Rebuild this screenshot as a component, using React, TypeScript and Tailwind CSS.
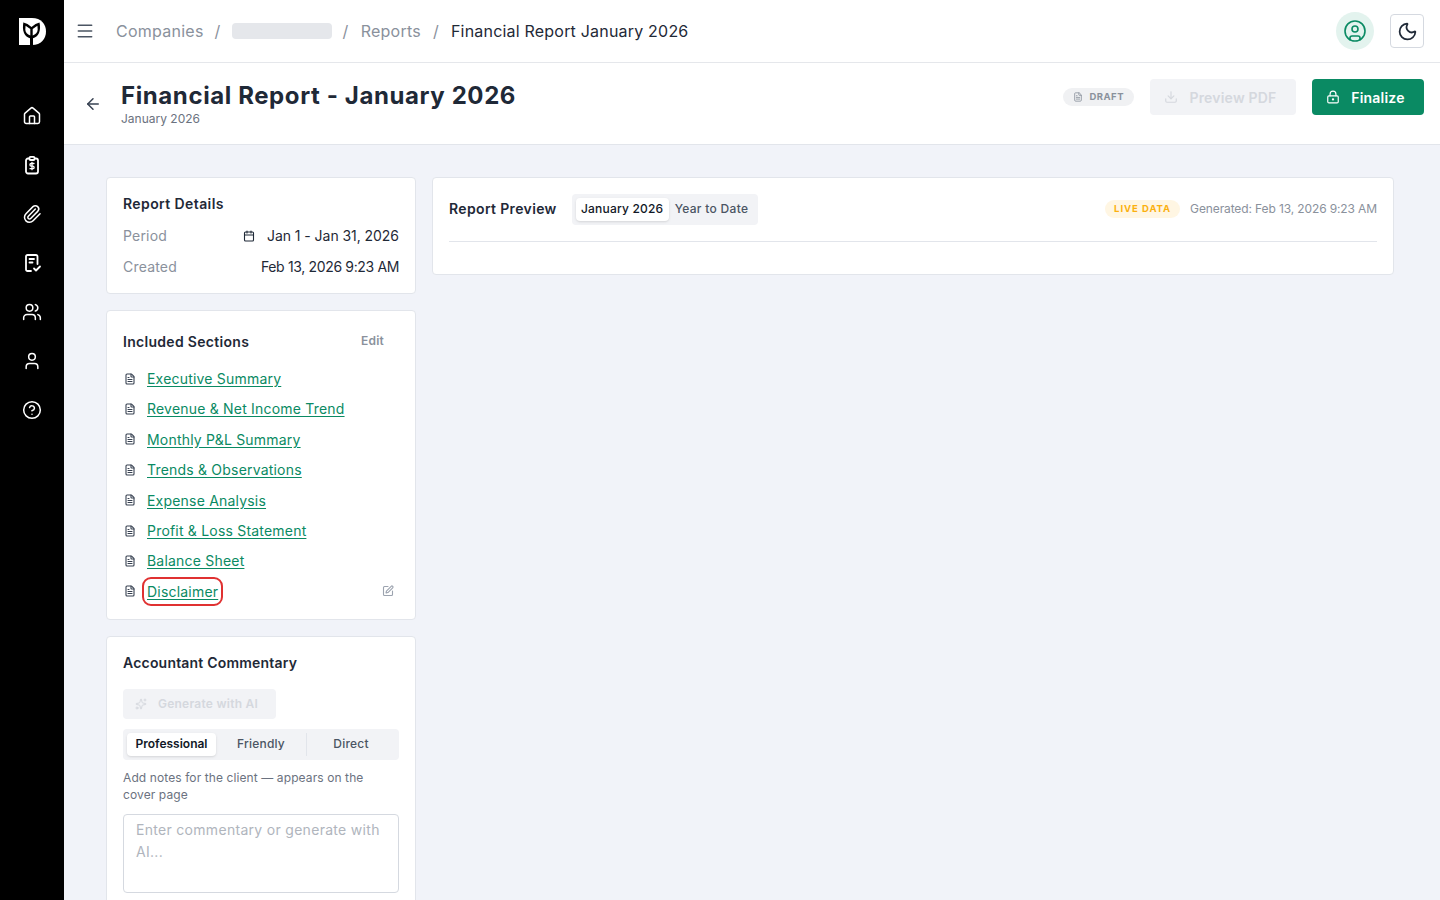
import React from 'react';
import { ArrowLeft, CircleHelp, CircleUser, Download, FileText, House, LockKeyhole, Menu, Moon, Paperclip, SquarePen, User, Users, Sparkles, Calendar } from 'lucide-react';

const sections = [
    'Executive Summary',
    'Revenue & Net Income Trend',
    'Monthly P&L Summary',
    'Trends & Observations',
    'Expense Analysis',
    'Profit & Loss Statement',
    'Balance Sheet',
    'Disclaimer',
];

const Logo = () => (
    <svg width="27" height="27" viewBox="0 0 27 27">
        <path fill="#fff" d="M0 0 H13 C22 0 27 6 27 13.5 C27 21 22 27 13 27 H0 Z" />
        <path fill="#000" d="M4.5 4.5 L8.5 6 L12.5 9 L16.5 6 L20.5 4.5 C21.3 8 21.3 12 20 15 C18.7 18 16.5 19.5 14 20.2 V27 H11 V20.2 C8.5 19.5 6.3 18 5 15 C3.7 12 3.7 8 4.5 3.5 Z" />
        <path fill="#fff" d="M6.6 7.8 L11.3 11 V17.6 C8.5 16.6 6.3 14.3 6.3 11.5 Z M18.4 7.8 L13.7 11 V17.6 C16.5 16.6 18.7 14.3 18.7 11.5 Z" />
    </svg>
);

const ClipboardDollar = () => (
    <svg width="20" height="20" viewBox="0 0 20 20" fill="none" stroke="#fff" strokeWidth="1.8" strokeLinecap="round" strokeLinejoin="round">
        <rect x="4" y="3.5" width="12" height="15" rx="2" />
        <rect x="7.5" y="1.8" width="5" height="3.2" rx="1" fill="#000" />
        <path d="M12 8.5 H9.2 a1.2 1.2 0 0 0 0 2.6 h1.6 a1.2 1.2 0 0 1 0 2.6 H8 M10 7.5 v7.2" strokeWidth="1.3" />
    </svg>
);

const ReportCheck = () => (
    <svg width="20" height="20" viewBox="0 0 20 20" fill="none" stroke="#fff" strokeWidth="1.8" strokeLinecap="round" strokeLinejoin="round">
        <path d="M9 18 H5.5 A1.5 1.5 0 0 1 4 16.5 V3.5 A1.5 1.5 0 0 1 5.5 2 H14 A1.5 1.5 0 0 1 15.5 3.5 V11" />
        <path d="M7.5 6 H12 M7.5 9.5 H10.5" />
        <path d="M12 15.5 L14 17.5 L18 13.5" />
    </svg>
);

const Sidebar = () => (
    <aside className="w-16 shrink-0 bg-black flex flex-col items-center">
        <div className="h-[62px] flex items-center justify-center">
            <Logo />
        </div>
        <nav className="mt-[44px] flex flex-col items-center gap-[29px] text-white">
            <House size={20} strokeWidth={1.8} />
            <ClipboardDollar />
            <Paperclip size={20} strokeWidth={1.8} />
            <ReportCheck />
            <Users size={20} strokeWidth={1.8} />
            <User size={20} strokeWidth={1.8} />
            <CircleHelp size={20} strokeWidth={1.8} />
        </nav>
    </aside>
);

const TopBar = () => (
    <header className="h-[63px] shrink-0 bg-white border-b border-[#e5e7eb] flex items-center pl-[11px] pr-4">
        <Menu size={20} strokeWidth={1.8} className="text-[#4b5563]" />
        <div className="ml-[21px] flex items-center text-[16px] text-[#8a919c] tracking-[0.25px]">
            <span>Companies</span>
            <span className="mx-[11px]">/</span>
            <span className="w-[100px] h-4 rounded bg-[#e5e7eb]"></span>
            <span className="ml-[11px] mr-[12px]">/</span>
            <span>Reports</span>
            <span className="mx-[12px]">/</span>
            <span className="text-[#1f2937] tracking-[0.2px]">Financial Report January 2026</span>
        </div>
        <div className="ml-auto flex items-center gap-4">
            <div className="w-[38px] h-[38px] rounded-full bg-[#e3f3ee] flex items-center justify-center text-[#0a8a63]">
                <CircleUser size={24} strokeWidth={1.6} />
            </div>
            <div className="w-[34px] h-[34px] rounded border border-[#d5d9e0] flex items-center justify-center text-[#1f2937]">
                <Moon size={21} strokeWidth={2} />
            </div>
        </div>
    </header>
);

const PageHeader = () => (
    <div className="h-[82px] shrink-0 bg-white border-b border-[#e2e5eb] flex items-start pl-[20px] pr-4 pt-4">
        <ArrowLeft size={18} strokeWidth={2} className="text-[#374151] mt-4" />
        <div className="ml-[19px] mt-[1px]">
            <h1 className="text-[24px] leading-[32px] font-bold text-[#1f2937] tracking-[0.6px]">Financial Report - January 2026</h1>
            <p className="text-[12px] leading-4 -mt-[1px] text-[#6b7280]">January 2026</p>
        </div>
        <div className="ml-auto flex items-center">
            <span className="h-[18px] px-[10px] rounded-full bg-[#f0f1f3] flex items-center gap-[6px] text-[9.5px] font-bold text-[#8a919c] tracking-[0.5px]">
                <FileText size={10} /> DRAFT
            </span>
            <button className="ml-4 w-[146px] h-9 pr-[5px] rounded bg-[#f2f3f6] flex items-center justify-center gap-[11px] text-[14px] font-semibold text-[#d5d8de] tracking-[0.2px]">
                <Download size={14} /> Preview PDF
            </button>
            <button className="ml-4 w-[112px] h-9 pr-[5px] rounded bg-[#0a8a63] flex items-center justify-center gap-[11px] text-[14px] font-semibold text-white tracking-[0.2px]">
                <LockKeyhole size={14} /> Finalize
            </button>
        </div>
    </div>
);

const Card: React.FC<{ children: React.ReactNode; className?: string }> = ({ children, className }) => (
    <div className={`bg-white rounded border border-[#e2e5eb] tracking-[0.2px] ${className ?? ''}`}>{children}</div>
);

const ReportDetails = () => (
    <Card className="h-[117px] px-4 pt-[17px]">
        <h3 className="text-[14px] leading-[18px] font-semibold text-[#1f2937] tracking-[0.4px]">Report Details</h3>
        <div className="mt-[7px] flex items-center justify-between h-[31px] text-[14px]">
            <span className="text-[#8a919c]">Period</span>
            <span className="flex items-center gap-3 text-[#1f2937] tracking-[-0.05px]"><Calendar size={12} strokeWidth={2.2} /> Jan 1 - Jan 31, 2026</span>
        </div>
        <div className="flex items-center justify-between h-[31px] text-[14px]">
            <span className="text-[#8a919c]">Created</span>
            <span className="text-[#1f2937] tracking-[-0.35px]">Feb 13, 2026 9:23 AM</span>
        </div>
    </Card>
);

const IncludedSections = () => (
    <Card className="h-[310px] px-4 pt-[20px]">
        <div className="flex items-center justify-between h-5">
            <h3 className="text-[14px] font-semibold text-[#1f2937] tracking-[0.3px]">Included Sections</h3>
            <span className="mr-[15px] text-[12px] font-semibold text-[#8a919c]">Edit</span>
        </div>
        <ul className="mt-[12.4px]">
            {sections.map((s, i) => (
                <li key={s} className="h-[30.4px] flex items-center">
                    <FileText size={12} strokeWidth={2.2} className="text-[#374151] ml-[1px]" />
                    <span className="relative ml-[11px] text-[14px] text-[#0a8a63] underline underline-offset-2">
                        {s}
                        {i === 7 && <span className="absolute -left-[5px] -right-[5px] -top-[4px] -bottom-[4px] rounded-[9px] border-[2.5px] border-[#e03131]"></span>}
                    </span>
                    {i === 7 && <SquarePen size={12} strokeWidth={2.2} className="ml-auto mr-[5px] text-[#9ca3af]" />}
                </li>
            ))}
        </ul>
    </Card>
);

const Commentary = () => (
    <Card className="px-4 pt-[16px] pb-8 rounded-b-none">
        <h3 className="text-[14px] leading-[20px] font-semibold text-[#1f2937]">Accountant Commentary</h3>
        <button className="mt-[16px] w-[153px] h-[30px] pr-[6px] rounded bg-[#f2f3f6] flex items-center justify-center gap-[11px] text-[12px] font-semibold text-[#d5d8de] tracking-[0.25px]">
            <Sparkles size={12} /> Generate with AI
        </button>
        <div className="mt-[10px] h-[31px] rounded bg-[#f2f3f6] flex items-center px-1 text-[12px] font-medium text-[#4b5563]">
            <span className="w-[89px] h-[23px] pb-[1px] rounded bg-white shadow-sm flex items-center justify-center font-semibold text-[#111827] tracking-[0px]">Professional</span>
            <span className="w-[90px] pb-[1px] text-center">Friendly</span>
            <span className="flex-1 h-[23px] pb-[1px] border-l border-[#e2e5eb] flex items-center justify-center">Direct</span>
        </div>
        <p className="mt-[9px] text-[12px] leading-[17px] text-[#6b7280] tracking-[0.1px]">Add notes for the client — appears on the cover page</p>
        <div className="mt-[11px] h-[79px] rounded border border-[#d5d9e0] px-3 py-[4px] text-[14px] leading-[22px] text-[#b0b5bd] tracking-[0.3px]">Enter commentary or generate with AI...</div>
    </Card>
);

const ReportPreview = () => (
    <Card className="h-[98px] px-4">
        <div className="h-[64px] pb-[1px] border-b border-[#e2e5eb] flex items-center">
            <h3 className="text-[14px] font-semibold text-[#1f2937] tracking-[0.35px] -mt-[1px]">Report Preview</h3>
            <div className="ml-[15px] h-[31px] rounded bg-[#f2f3f6] flex items-center px-1 text-[12px] font-medium">
                <span className="w-[93px] h-[23px] rounded bg-white shadow-sm flex items-center justify-center text-[#111827]">January 2026</span>
                <span className="px-[6px] text-[#4b5563] tracking-[0.3px]">Year to Date</span>
            </div>
            <span className="ml-auto h-[18px] px-[9px] rounded-full bg-[#fff6e3] flex items-center text-[9.5px] font-bold text-[#fbb00f] tracking-[0.95px]">LIVE DATA</span>
            <span className="ml-[10px] text-[12px] text-[#8a919c] tracking-[-0.12px]">Generated: Feb 13, 2026 9:23 AM</span>
        </div>
    </Card>
);

const App: React.FC = () => (
    <div className="h-screen overflow-hidden flex font-['Inter',sans-serif]">
        <Sidebar />
        <div className="flex-1 min-w-0 flex flex-col bg-[#f1f3f9]">
            <TopBar />
            <PageHeader />
            <main className="flex-1 min-h-0 overflow-hidden pt-8 pl-[42px] pr-[46px] flex items-start gap-4">
                <div className="w-[310px] shrink-0 flex flex-col gap-4">
                    <ReportDetails />
                    <IncludedSections />
                    <Commentary />
                </div>
                <div className="flex-1 min-w-0">
                    <ReportPreview />
                </div>
            </main>
        </div>
    </div>
);

export default App;
